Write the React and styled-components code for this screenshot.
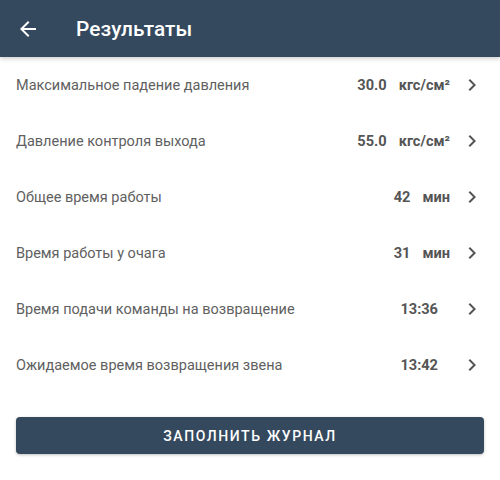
import React from "react";
import styled, { createGlobalStyle } from "styled-components";

const Global = createGlobalStyle`
  html, body { margin: 0; padding: 0; background: #fff; }
  body { font-family: Roboto, "Noto Sans", sans-serif; }
`;

const Page = styled.div`
  width: 500px;
  min-height: 480px;
  display: flex;
  flex-direction: column;
  background: #fff;
`;

const Header = styled.header`
  height: 57px;
  background: #34495e;
  display: flex;
  align-items: center;
  box-shadow: 0 2px 4px rgba(0, 0, 0, 0.18);
  position: relative;
  z-index: 1;
`;

const BackButton = styled.button`
  width: 24px;
  height: 24px;
  margin-left: 16px;
  padding: 0;
  border: none;
  background: none;
  display: flex;
  color: #fff;
`;

const Title = styled.h1`
  margin: 0 0 0 36px;
  font-size: 20.8px;
  font-weight: 500;
  color: #fff;
  letter-spacing: 0.1px;
`;

const List = styled.div`
  display: flex;
  flex-direction: column;
`;

const Row = styled.div`
  height: 56px;
  display: flex;
  align-items: center;
  padding: 0 16px;
`;

const Label = styled.span`
  flex: 1;
  font-size: 14.5px;
  color: #5f5f5f;
`;

const Value = styled.span`
  display: flex;
  gap: 12px;
  font-size: 14.6px;
  font-weight: 700;
  color: #555;
`;

const Chevron = styled.span`
  width: 24px;
  height: 24px;
  margin-left: 10px;
  display: flex;
  color: #555;
`;

const Footer = styled.div`
  padding: 24px 16px 0;
`;

const ActionButton = styled.button`
  width: 100%;
  height: 37px;
  border: none;
  border-radius: 4px;
  background: #34495e;
  color: #fff;
  font-family: Roboto, sans-serif;
  font-size: 14px;
  font-weight: 500;
  letter-spacing: 1.6px;
  box-shadow: 0 1px 3px rgba(0, 0, 0, 0.25);
`;

const rows = [
  { label: "Максимальное падение давления", value: "30.0", unit: "кгс/см²" },
  { label: "Давление контроля выхода", value: "55.0", unit: "кгс/см²" },
  { label: "Общее время работы", value: "42", unit: "мин" },
  { label: "Время работы у очага", value: "31", unit: "мин" },
  { label: "Время подачи команды на возвращение", value: "13:36", unit: "" },
  { label: "Ожидаемое время возвращения звена", value: "13:42", unit: "" },
];

export default function App() {
  return (
    <Page>
      <Global />
      <Header>
        <BackButton aria-label="Назад">
          <svg width="24" height="24" viewBox="0 0 24 24" fill="currentColor">
            <path d="M20 11H7.83l5.59-5.59L12 4l-8 8 8 8 1.41-1.41L7.83 13H20v-2z" />
          </svg>
        </BackButton>
        <Title>Результаты</Title>
      </Header>
      <List>
        {rows.map((r) => (
          <Row key={r.label}>
            <Label>{r.label}</Label>
            <Value>
              <span>{r.value}</span>
              <span>{r.unit}</span>
            </Value>
            <Chevron>
              <svg width="24" height="24" viewBox="0 0 24 24" fill="currentColor">
                <path d="M10 6L8.59 7.41 13.17 12l-4.58 4.59L10 18l6-6z" />
              </svg>
            </Chevron>
          </Row>
        ))}
      </List>
      <Footer>
        <ActionButton>ЗАПОЛНИТЬ ЖУРНАЛ</ActionButton>
      </Footer>
    </Page>
  );
}
